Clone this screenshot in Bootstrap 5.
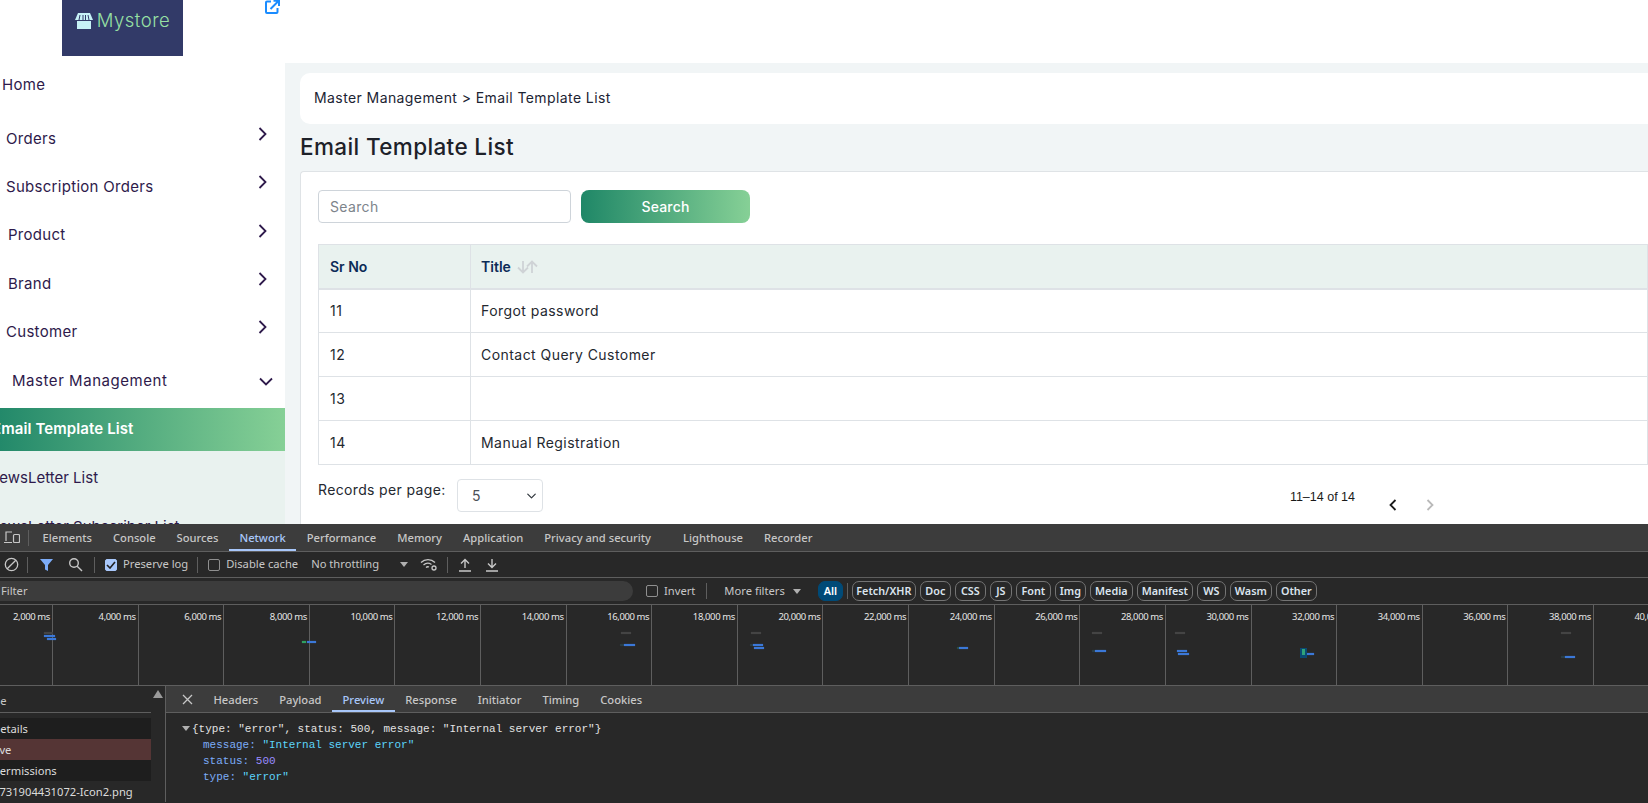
<!DOCTYPE html>
<html lang="en">

<head>
    <meta charset="UTF-8">
    <meta name="viewport" content="width=device-width, initial-scale=1.0">
    <title>Email Template List</title>
    <link href="https://cdn.jsdelivr.net/npm/bootstrap@5.3.3/dist/css/bootstrap.min.css" rel="stylesheet">
    <style>
        html, body { height: 803px; overflow: hidden; }
        body { font-family: Inter, "Liberation Sans", sans-serif; background: #fff; }

        /* store page */
        .store-area { height: 524px; overflow: hidden; }
        .store-top { height: 63px; padding-left: 62px; }
        .store-logo { width: 121px; height: 56px; background: #323a68; color: #97e0a4; font-size: 18.5px; font-weight: 300; letter-spacing: .5px; padding-bottom: 14px; }
        .ext-link { margin: 0 0 0 82px; line-height: 0; height: 14px; }
        .side-menu { width: 285px; height: 461px; overflow: hidden; font-size: 15px; letter-spacing: .29px; color: #2e1a4b; }
        .menu-row { height: 48.3px; padding-right: 18px; }
        .menu-home { height: 44px; padding-left: 2px; margin-bottom: 8px; }
        .menu-chev { margin-bottom: 10px; }
        .in-6 { padding-left: 6px; }
        .in-8 { padding-left: 8px; }
        .in-12 { padding-left: 12px; padding-right: 12px; padding-top: 1px; letter-spacing: .55px; }
        .menu-active { height: 43px; margin-top: 3px; background: linear-gradient(90deg, #23896a, #86d096); color: #fff; font-weight: 600; letter-spacing: .1px; }
        .menu-sub { background: #e9f2ef; height: 90px; letter-spacing: 0; }
        .menu-sub .sub-row { height: 54px; }
        .menu-sub .last-row { margin-top: 11px; }
        .cut-8 { margin-left: -8px; }
        .cut-12 { margin-left: -12px; }
        .main-area { background: #f1f5f6; padding: 10px 0 0 15px; height: 461px; overflow: hidden; }
        .crumb-box { height: 51px; background: #fff; border-radius: 10px 0 0 10px; padding: 0 0 2px 14px; font-size: 14px; letter-spacing: .41px; color: #1c2433; }
        .page-head { font-size: 22.5px; font-weight: 500; letter-spacing: .37px; color: #1d2129; margin: 9px 0 11px; line-height: 27px; }
        .list-box { border: 1px solid #dfe3e6; border-right: 0; background: #fff; border-radius: 4px 0 0 0; padding: 18px 0 20px 17px; height: 400px; }
        .search-input { width: 253px; height: 33px; font-size: 14px; letter-spacing: .35px; border-color: #ced4da; border-radius: 4px; padding: 0 11px; }
        .search-input::placeholder { color: #7d848b; }
        .search-btn { width: 169px; height: 33px; margin-left: 2px; padding: 0; font-size: 14px; font-weight: 500; letter-spacing: .2px; border: 0; border-radius: 8px; color: #fff; background: linear-gradient(90deg, #1f8767, #86d096); }
        .tpl-table { margin: 21px 0 0; font-size: 14px; color: #24282f; border-color: #dee2e6; }
        .tpl-table th { background: #e9f2ef; color: #0c2b57; font-weight: 600; height: 44px; padding: 0 10px; vertical-align: middle; border-bottom-width: 2px; }
        .tpl-table td { height: 44px; padding: 0 10px; vertical-align: middle; color: #24282f; letter-spacing: .45px; }
        .tpl-table tr > :first-child { padding-left: 11px; }
        .sr-col { width: 152px; }
        .sort-arrows { margin-left: 2px; vertical-align: -2px; }
        .rec-row { margin-top: 14px; }
        .rec-label { font-size: 14px; letter-spacing: .35px; color: #24282f; line-height: 20px; margin-top: 1px; width: 139px; }
        .rec-select { width: 86px; height: 33px; font-size: 14px; padding: 0 0 0 14px; color: #4b5157; border-radius: 4px; background-position: right 4px center; background-size: 13px 10px; }
        .pager { margin: 9px 214px 0 auto; font-family: "Liberation Sans", Arial, sans-serif; font-size: 12.5px; color: #1a1a1a; }
        .pager-count { margin-right: 34px; }
        .pager-arrow { margin-top: 11px; line-height: 0; }
        .pager-arrow.prev { margin-right: 29px; }

        /* devtools */
        .dev-panel { height: 279px; background: #282828; color: #c7c7c7; font-family: "Noto Sans", "Liberation Sans", sans-serif; font-size: 11.2px; overflow: hidden; }
        .dev-tabs { height: 28px; background: #3c3c3c; border-bottom: 1px solid #5e5e5e; white-space: nowrap; }
        .dev-tab { position: relative; height: 27px; display: flex; align-items: center; padding: 2px 10.5px 0; font-weight: 500; }
        .dev-tab.on { color: #a8c7fa; }
        .dev-tab.on::after { content: ""; position: absolute; left: 0; right: 0; bottom: 0; height: 2px; background: #a8c7fa; }
        .dev-bar { height: 26px; border-bottom: 1px solid #5e5e5e; white-space: nowrap; }
        .dev-sep { width: 1px; height: 16px; background: #5e5e5e; }
        .dev-check { width: 12px; height: 12px; border: 1px solid #8f8f8f; border-radius: 2px; display: inline-block; }
        .dev-check.on { background: #a8c7fa; border-color: #a8c7fa; }
        .filter-row { height: 27px; background: #282828; border-bottom: 1px solid #5e5e5e; }
        .filter-box { width: 633px; height: 20px; background: #3c3c3c; border-radius: 0 10px 10px 0; padding-left: 1px; }
        .chip { height: 20px; border: 1px solid #747474; border-radius: 7px; padding: 0 3px; display: flex; align-items: center; justify-content: center; color: #dbe4ee; font-weight: 600; font-size: 10.8px; }
        .chip.on { background: #004a77; border-color: #004a77; color: #fff; }
        .time-strip { position: relative; height: 81px; border-bottom: 1px solid #5e5e5e; white-space: nowrap; overflow: hidden; }
        .time-cell { flex: 0 0 85.62px; height: 100%; border-right: 1px solid #5e5e5e; text-align: right; font-size: 9.5px; letter-spacing: -.4px; padding: 5px 2px 0 0; color: #e6e6e6; }
        .time-cell.first { flex-basis: 53px; }
        .time-bar { position: absolute; height: 2px; box-shadow: 0 0 1px currentColor; }
        .lower-part { height: 116px; }
        .req-list { width: 151px; overflow: hidden; }
        .req-head { height: 27px; background: #282828; border-bottom: 1px solid #5e5e5e; padding-top: 7px; margin-bottom: 5px; }
        .req-row { height: 21px; line-height: 21px; background: #1e1e1e; color: #dcdcdc; white-space: nowrap; }
        .req-row.bad { background: #553535; }
        .req-row.alt { background: #282828; }
        .req-scroll { width: 15px; background: #282828; border-right: 1px solid #5e5e5e; padding-top: 4px; line-height: 0; text-align: center; }
        .detail-tabs { height: 27px; background: #3c3c3c; border-bottom: 1px solid #5e5e5e; white-space: nowrap; }
        .detail-tabs .dev-tab { height: 26px; padding-top: 2px; }
        .json-view { font-family: "Liberation Mono", monospace; font-size: 11px; line-height: 16px; padding: 8px 0 0 26px; color: #e3e3e3; white-space: pre; }
        .json-child { padding-left: 11px; color: #7cacf8; }
        .json-str { color: #5cd5fb; }
        .json-num { color: #9a8cff; }
        .tri-down { display: inline-block; width: 0; height: 0; border-left: 4px solid transparent; border-right: 4px solid transparent; border-top: 5px solid #b0b0b0; }

        /* toolbar spacing, measured off the screenshot */
        .tab-first { margin-left: 3px; }
        .tab-gap { margin-left: 11px; }
        .filter-ico { margin-left: 12px; }
        .search-glass { margin-left: 15px; }
        .sep-b { margin-left: 11px; }
        .check-a { margin-left: 10px; }
        .label-a { margin-left: 6px; }
        .sep-c { margin-left: 9px; }
        .check-b { margin-left: 10px; }
        .label-b { margin-left: 6px; }
        .label-c { margin-left: 13px; }
        .tri-c { margin-left: 21px; }
        .wifi-ico { margin-left: 12px; }
        .sep-d { margin-left: 10px; }
        .up-ico { margin-left: 11px; }
        .down-ico { margin-left: 15px; }
        .check-inv { margin-left: 13px; }
        .label-inv { margin-left: 6px; }
        .sep-inv { margin-left: 11px; }
        .label-more { margin-left: 17px; }
        .tri-more { margin-left: 8px; }
        .chip-wrap { margin-left: 17px; gap: 4px; }
        .cut-head { margin-left: -25px; display: inline-block; }
        .cut-d { margin-left: -8px; display: inline-block; }
        .cut-s { margin-left: -13px; display: inline-block; }
        .cut-p { margin-left: -7px; display: inline-block; }
        .detail-x { margin: 0 10px 0 16px; }
        .json-tri { position: absolute; margin: 5px 0 0 -10px; }
    </style>
</head>

<body>
    <div class="store-area">
        <div class="store-top d-flex align-items-start">
            <div class="store-logo d-flex align-items-center justify-content-center">
                <svg width="18" height="16" viewBox="0 0 18 16" class="me-1">
                    <path d="M3 0h12l3 7H0z" fill="#c6f1f6"/>
                    <path d="M2 8h14v8H2z" fill="#c6f1f6"/>
                    <path d="M5 2 4 7M8 2v5M10.500 2v5M13 2l1 5" stroke="#323a68" stroke-width="1"/>
                </svg>
                <span>Mystore</span>
            </div>
            <div class="ext-link">
                <svg width="15" height="14" viewBox="0 0 15 14" fill="none" stroke="#1a8cff" stroke-width="2">
                    <path d="M6 1.500H2a1 1 0 0 0-1 1V12a1 1 0 0 0 1 1h9.500a1 1 0 0 0 1-1V8"/>
                    <path d="M5.500 9 13 1.500M8.500 0.800H14V6"/>
                </svg>
            </div>
        </div>

        <div class="d-flex">
            <div class="side-menu flex-shrink-0">
                <div class="menu-home d-flex align-items-center">Home</div>
                <div class="menu-row in-6 d-flex align-items-center justify-content-between"><span>Orders</span><svg class="menu-chev" width="9" height="14" viewBox="0 0 9 14" fill="none" stroke="#2e1a4b" stroke-width="1.800"><path d="M1.500 1 7.500 7l-6 6"/></svg></div>
                <div class="menu-row in-6 d-flex align-items-center justify-content-between"><span>Subscription Orders</span><svg class="menu-chev" width="9" height="14" viewBox="0 0 9 14" fill="none" stroke="#2e1a4b" stroke-width="1.800"><path d="M1.500 1 7.500 7l-6 6"/></svg></div>
                <div class="menu-row in-8 d-flex align-items-center justify-content-between"><span>Product</span><svg class="menu-chev" width="9" height="14" viewBox="0 0 9 14" fill="none" stroke="#2e1a4b" stroke-width="1.800"><path d="M1.500 1 7.500 7l-6 6"/></svg></div>
                <div class="menu-row in-8 d-flex align-items-center justify-content-between"><span>Brand</span><svg class="menu-chev" width="9" height="14" viewBox="0 0 9 14" fill="none" stroke="#2e1a4b" stroke-width="1.800"><path d="M1.500 1 7.500 7l-6 6"/></svg></div>
                <div class="menu-row in-6 d-flex align-items-center justify-content-between"><span>Customer</span><svg class="menu-chev" width="9" height="14" viewBox="0 0 9 14" fill="none" stroke="#2e1a4b" stroke-width="1.800"><path d="M1.500 1 7.500 7l-6 6"/></svg></div>
                <div class="menu-row in-12 d-flex align-items-center justify-content-between"><span>Master Management</span><svg width="14" height="9" viewBox="0 0 14 9" fill="none" stroke="#2e1a4b" stroke-width="1.800"><path d="M1 1.500 7 7.500l6-6"/></svg></div>
                <div class="menu-active d-flex align-items-center"><span class="cut-8">Email Template List</span></div>
                <div class="menu-sub">
                    <div class="sub-row d-flex align-items-center"><span class="cut-12">NewsLetter List</span></div>
                    <div class="cut-12 last-row">NewsLetter Subscriber List</div>
                </div>
            </div>

            <div class="main-area flex-grow-1">
                <div class="crumb-box d-flex align-items-center">Master Management &gt; Email Template List</div>
                <h1 class="page-head">Email Template List</h1>
                <div class="list-box">
                    <div class="d-flex gap-2">
                        <input type="text" class="form-control search-input" placeholder="Search">
                        <button type="button" class="btn search-btn">Search</button>
                    </div>
                    <table class="table table-bordered tpl-table">
                        <thead>
                            <tr>
                                <th class="sr-col">Sr No</th>
                                <th>Title
                                    <svg class="sort-arrows" width="23" height="14" viewBox="0 0 23 14" fill="none" stroke="#cfd3d6" stroke-width="1.800">
                                        <path d="M7 1v11M2 7.500 7 12.500l5-5"/>
                                        <path d="M16 13V2M11 6.500 16 1.500l5 5"/>
                                    </svg>
                                </th>
                            </tr>
                        </thead>
                        <tbody id="tpl-list"></tbody>
                    </table>
                    <div class="d-flex align-items-start rec-row">
                        <div class="rec-label">Records per page:</div>
                        <select class="form-select rec-select">
                            <option>5</option>
                            <option>10</option>
                        </select>
                        <div class="pager d-flex align-items-start">
                            <span class="pager-count">11–14 of 14</span>
                            <span class="pager-arrow prev"><svg width="8" height="12" viewBox="0 0 8 12" fill="none" stroke="#1a1a1a" stroke-width="1.800"><path d="M6.500 1 1.500 6l5 5"/></svg></span>
                            <span class="pager-arrow"><svg width="8" height="12" viewBox="0 0 8 12" fill="none" stroke="#b9b9b9" stroke-width="1.800"><path d="M1.500 1l5 5-5 5"/></svg></span>
                        </div>
                    </div>
                </div>
            </div>
        </div>
    </div>

    <div class="dev-panel">
        <div class="dev-tabs d-flex align-items-center">
            <svg class="ms-1 me-2 flex-shrink-0" width="16" height="14" viewBox="0 0 16 14" fill="none" stroke="#c7c7c7" stroke-width="1.200"><path d="M8 1H2v9M0 11.500h8"/><rect x="9.500" y="3.500" width="6" height="8" rx="1"/></svg>
            <div class="dev-sep flex-shrink-0"></div>
            <div class="dev-tab tab-first">Elements</div>
            <div class="dev-tab">Console</div>
            <div class="dev-tab">Sources</div>
            <div class="dev-tab on">Network</div>
            <div class="dev-tab">Performance</div>
            <div class="dev-tab">Memory</div>
            <div class="dev-tab">Application</div>
            <div class="dev-tab">Privacy and security</div>
            <div class="dev-tab tab-gap">Lighthouse</div>
            <div class="dev-tab">Recorder</div>
        </div>

        <div class="dev-bar d-flex align-items-center">
            <svg class="ms-1 flex-shrink-0" width="15" height="15" viewBox="0 0 15 15" fill="none" stroke="#c7c7c7" stroke-width="1.300"><circle cx="7.500" cy="7.500" r="6.200"/><path d="M3.200 11.800 11.800 3.200"/></svg>
            <div class="dev-sep ms-2 flex-shrink-0"></div>
            <svg class="filter-ico flex-shrink-0" width="13" height="12" viewBox="0 0 13 12"><path d="M0 0h13L8 6v6L5 10.500V6z" fill="#7cacf8"/></svg>
            <svg class="flex-shrink-0 search-glass" width="15" height="15" viewBox="0 0 15 15" fill="none" stroke="#c7c7c7" stroke-width="1.400"><circle cx="6" cy="6" r="4.300"/><path d="M9.200 9.200 14 14"/></svg>
            <div class="dev-sep flex-shrink-0 sep-b"></div>
            <span class="dev-check on d-flex align-items-center justify-content-center flex-shrink-0 check-a"><svg width="10" height="8" viewBox="0 0 10 8" fill="none" stroke="#1f1f1f" stroke-width="1.600"><path d="M1 4l3 3 5-6"/></svg></span>
            <span class="label-a">Preserve log</span>
            <div class="dev-sep flex-shrink-0 sep-c"></div>
            <span class="dev-check flex-shrink-0 check-b"></span>
            <span class="label-b">Disable cache</span>
            <span class="label-c">No throttling</span>
            <span class="tri-down tri-c flex-shrink-0"></span>
            <svg class="flex-shrink-0 wifi-ico" width="17" height="13" viewBox="0 0 17 13" fill="none" stroke="#c7c7c7" stroke-width="1.300"><path d="M1 4.500a10 10 0 0 1 14 0M3.500 7a6.500 6.500 0 0 1 8 -0.500M6 9.500a3 3 0 0 1 3-0.500"/><circle cx="14" cy="10" r="2"/></svg>
            <div class="dev-sep flex-shrink-0 sep-d"></div>
            <svg class="flex-shrink-0 up-ico" width="12" height="14" viewBox="0 0 12 14" fill="none" stroke="#c7c7c7" stroke-width="1.400"><path d="M6 10V1.500M2 5.500l4-4 4 4M0 13h12"/></svg>
            <svg class="flex-shrink-0 down-ico" width="12" height="14" viewBox="0 0 12 14" fill="none" stroke="#c7c7c7" stroke-width="1.400"><path d="M6 1v8.500M2 5.500l4 4 4-4M0 13h12"/></svg>
        </div>

        <div class="filter-row d-flex align-items-center">
            <div class="filter-box d-flex align-items-center flex-shrink-0">Filter</div>
            <span class="dev-check flex-shrink-0 check-inv"></span>
            <span class="label-inv">Invert</span>
            <div class="dev-sep flex-shrink-0 sep-inv"></div>
            <span class="label-more">More filters</span>
            <span class="tri-down flex-shrink-0 tri-more"></span>
            <div id="chip-list" class="d-flex align-items-center chip-wrap"></div>
        </div>

        <div id="time-strip" class="time-strip d-flex"></div>

        <div class="lower-part d-flex">
            <div class="req-list flex-shrink-0">
                <div class="req-head"><span class="cut-head">Name</span></div>
                <div class="req-row"><span class="cut-d">Details</span></div>
                <div class="req-row bad"><span class="cut-s">Save</span></div>
                <div class="req-row"><span class="cut-p">Permissions</span></div>
                <div class="req-row alt"><span class="cut-p">1731904431072-Icon2.png</span></div>
            </div>
            <div class="req-scroll flex-shrink-0">
                <svg width="10" height="8" viewBox="0 0 10 8"><path d="M5 0l5 8H0z" fill="#9a9a9a"/></svg>
            </div>
            <div class="flex-grow-1">
                <div class="detail-tabs d-flex align-items-center">
                    <svg class="detail-x flex-shrink-0" width="11" height="11" viewBox="0 0 11 11" fill="none" stroke="#c7c7c7" stroke-width="1.300"><path d="M1 1l9 9M10 1l-9 9"/></svg>
                    <div class="dev-tab">Headers</div>
                    <div class="dev-tab">Payload</div>
                    <div class="dev-tab on">Preview</div>
                    <div class="dev-tab">Response</div>
                    <div class="dev-tab">Initiator</div>
                    <div class="dev-tab">Timing</div>
                    <div class="dev-tab">Cookies</div>
                </div>
                <div class="json-view"><span class="tri-down json-tri"></span>{type: "error", status: 500, message: "Internal server error"}
<div class="json-child">message: <span class="json-str">"Internal server error"</span></div><div class="json-child">status: <span class="json-num">500</span></div><div class="json-child">type: <span class="json-str">"error"</span></div></div>
            </div>
        </div>
    </div>

    <script>
        const rows = [
            { no: 11, title: 'Forgot password' },
            { no: 12, title: 'Contact Query Customer' },
            { no: 13, title: '' },
            { no: 14, title: 'Manual Registration' }
        ];
        document.getElementById('tpl-list').innerHTML = rows.map(r => `<tr><td>${r.no}</td><td>${r.title}</td></tr>`).join('');

        const chips = [['All', 25], ['Fetch/XHR', 64], ['Doc', 31], ['CSS', 31], ['JS', 22], ['Font', 35], ['Img', 31], ['Media', 43], ['Manifest', 56], ['WS', 29], ['Wasm', 42], ['Other', 41]];
        const chipList = document.getElementById('chip-list');
        chips.forEach((c, i) => {
            const el = document.createElement('div');
            el.className = 'chip' + (i === 0 ? ' on' : '');
            el.style.width = c[1] + 'px';
            el.textContent = c[0];
            chipList.appendChild(el);
            if (i === 0) {
                const sep = document.createElement('div');
                sep.className = 'dev-sep';
                chipList.appendChild(sep);
            }
        });

        // waterfall overview: one cell per 2 seconds, bars sit on top
        const strip = document.getElementById('time-strip');
        for (let i = 1; i <= 20; i++) {
            const cell = document.createElement('div');
            cell.className = 'time-cell' + (i === 1 ? ' first' : '');
            cell.textContent = (i * 2000).toLocaleString('en-US') + ' ms';
            strip.appendChild(cell);
        }
        const bars = [
            [44, 632, 9, '#444'], [44, 635, 11, '#3b78d8'], [47, 638, 9, '#3b78d8'],
            [302, 641, 4, '#2fa060'], [307, 641, 9, '#3b78d8'],
            [621, 632, 10, '#444'], [620, 644, 4, '#2a3d44'], [624, 644, 11, '#3b78d8'],
            [751, 632, 10, '#444'], [750, 644, 3, '#2a3d44'], [753, 644, 10, '#3b78d8'], [754, 647, 10, '#3b78d8'],
            [957, 647, 2, '#2a4d44'], [959, 647, 9, '#3b78d8'],
            [1092, 632, 10, '#444'], [1092, 650, 3, '#2a3d44'], [1095, 650, 11, '#3b78d8'],
            [1175, 632, 10, '#444'], [1177, 650, 10, '#3b78d8'], [1178, 653, 11, '#3b78d8'],
            [1307, 653, 7, '#3b78d8'],
            [1561, 632, 10, '#444'], [1561, 656, 4, '#2a3d44'], [1565, 656, 10, '#3b78d8']
        ];
        bars.forEach(b => {
            const el = document.createElement('div');
            el.className = 'time-bar';
            el.style.cssText = `left:${b[0]}px;top:${b[1] - 605}px;width:${b[2]}px;background:${b[3]};color:${b[3]}`;
            strip.appendChild(el);
        });
        const sel = document.createElement('div');
        sel.className = 'time-bar';
        sel.style.cssText = 'left:1300px;top:43px;width:7px;height:10px;background:#0a4a72;box-shadow:none';
        strip.appendChild(sel);
        const selIn = document.createElement('div');
        selIn.className = 'time-bar';
        selIn.style.cssText = 'left:1302px;top:44px;width:3px;height:6px;background:#2fa37a;box-shadow:none';
        strip.appendChild(selIn);
    </script>
    <script src="https://cdn.jsdelivr.net/npm/bootstrap@5.3.3/dist/js/bootstrap.bundle.min.js"></script>
</body>

</html>
